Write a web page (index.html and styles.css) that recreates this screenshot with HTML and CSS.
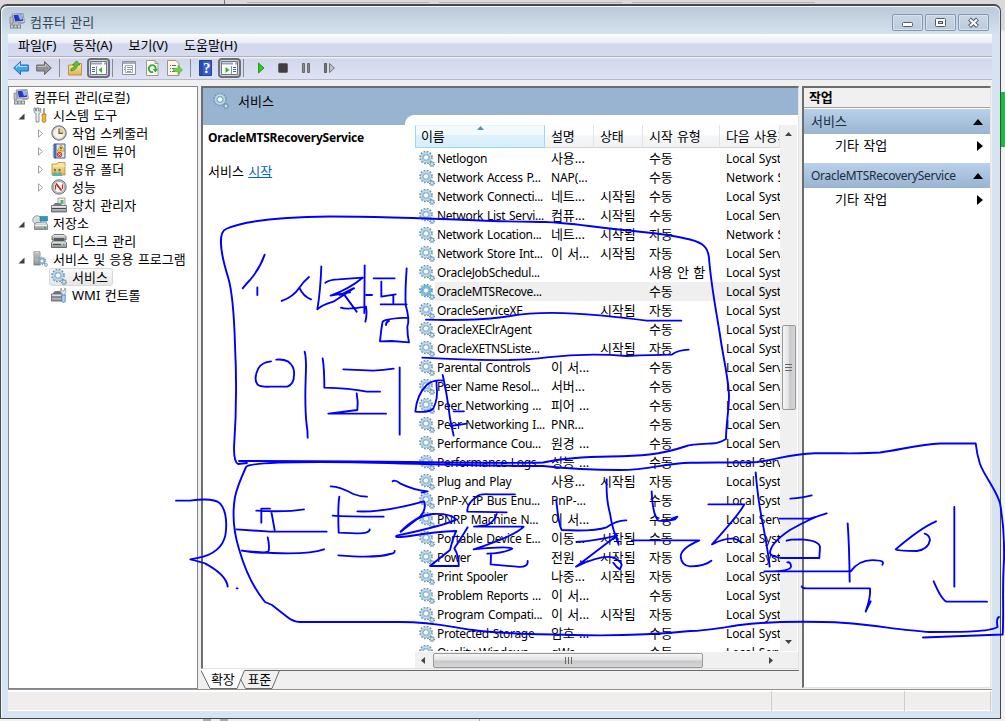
FILE: index.html
```html
<!DOCTYPE html>
<html lang="ko">
<head>
<meta charset="utf-8">
<title>컴퓨터 관리</title>
<link rel="stylesheet" href="styles.css">
</head>
<body>
<svg class="defs" width="0" height="0">
  <defs>
    <linearGradient id="folderFill" x1="0" y1="0" x2="0" y2="1"><stop offset="0" stop-color="#fbe9a8"/><stop offset="1" stop-color="#e0b455"/></linearGradient>
    <linearGradient id="steel" x1="0" y1="0" x2="0" y2="1"><stop offset="0" stop-color="#f4f4f4"/><stop offset="1" stop-color="#8c9094"/></linearGradient>
    <symbol id="gear" viewBox="0 0 16 16">
      <circle cx="7" cy="6.5" r="5.9" fill="none" stroke="#7497ae" stroke-width="1.9" stroke-dasharray="1.7 1.39"/>
      <circle cx="7" cy="6.5" r="4.2" fill="none" stroke="#8fbad4" stroke-width="2.6"/>
      <circle cx="7" cy="6.5" r="4.4" fill="none" stroke="#c3e2f3" stroke-width="1.1"/>
      <circle cx="7" cy="6.5" r="2.7" fill="#fff" stroke="#6b9aba" stroke-width=".8"/>
      <circle cx="13" cy="13" r="2.4" fill="none" stroke="#6d90a7" stroke-width="1.3" stroke-dasharray="1.1 .8"/>
      <circle cx="13" cy="13" r="1.5" fill="#f4fafd" stroke="#7ea8c1" stroke-width="1.1"/>
    </symbol>
    <symbol id="gear-active" viewBox="0 0 16 16">
      <circle cx="7" cy="6.5" r="5.9" fill="none" stroke="#4a93c9" stroke-width="1.9" stroke-dasharray="1.7 1.39"/>
      <circle cx="7" cy="6.5" r="4.2" fill="none" stroke="#6fb6e4" stroke-width="2.6"/>
      <circle cx="7" cy="6.5" r="2.7" fill="#fff" stroke="#4b97cc" stroke-width=".8"/>
      <circle cx="13" cy="13" r="2.4" fill="none" stroke="#4a8fc2" stroke-width="1.3" stroke-dasharray="1.1 .8"/>
      <circle cx="13" cy="13" r="1.5" fill="#f4fafd" stroke="#62a9da" stroke-width="1.1"/>
      <path d="M2 2h1.300v1.300h-1.300zM10.500 2h1.300v1.300h-1.300zM3 9.500h1.300v1.300h-1.300zM11.500 9.500h1.300v1.300h-1.300z" fill="#d9f000"/>
    </symbol>
    <symbol id="pc" viewBox="0 0 16 16">
      <path d="M3 1L14 0.5L15.5 9.5L5 10Z" fill="#d8d8d0" stroke="#8a8a84" stroke-width=".8"/>
      <path d="M4.5 2L13 1.6L14 8L6 8.5Z" fill="#2238c8"/><path d="M9 1.8L13 1.6L13.7 6L11 7Z" fill="#8fb4f4"/>
      <path d="M1 4H4V11H1Z" fill="#b9c0c6" stroke="#6d757b" stroke-width=".6"/>
      <path d="M1 11.5H12V15.5H1Z" fill="#80878c"/><path d="M2 12.5h2v2h-2zM5.5 12.5h2v2h-2zM9 12.5h2v2h-2z" fill="#d5dade"/>
      <path d="M9 10L14 9.7L15 11H9Z" fill="#a6a69e"/>
    </symbol>
    <symbol id="tools" viewBox="0 0 16 16">
      <path d="M2 1V4Q2 6 4 6.5V15H7V6.5Q9 6 9 3.5L8 1V4H6.5V1H4.5V4H3.5V1Z" fill="#e9edf0" stroke="#727a80" stroke-width=".8"/>
      <path d="M11.5 1.5H12.5V7H11.5Z" fill="#a0a5a9" stroke="#777" stroke-width=".5"/><path d="M10 7H14V9L13.4 10.5L14 13Q14 15.5 12 15.5Q10 15.5 10 13L10.6 10.5L10 9Z" fill="#f3b52a" stroke="#a87408" stroke-width=".7"/>
    </symbol>
    <symbol id="clock" viewBox="0 0 16 16"><circle cx="8" cy="8" r="7.2" fill="#b7b9ba" stroke="#6e7173"/><circle cx="8" cy="8" r="5.4" fill="#f9f3df" stroke="#e9e9e9"/><path d="M8 8V3A5 5 0 0 1 13 8Z" fill="#f0cb78"/><path d="M8 3.5V8.3H12" fill="none" stroke="#565d66" stroke-width="1.2"/></symbol>
    <symbol id="book" viewBox="0 0 16 16"><path d="M3 1H14V15H3Z" fill="#dde6f6" stroke="#3a5fa8"/><path d="M3 1H5.5V15H3Z" fill="#3d63b2"/><path d="M1.5 3H4.5M1.5 6H4.5M1.5 9H4.5M1.5 12H4.5" stroke="#748dbd"/><path d="M10 2L14 8H6Z" fill="#ffdc3d" stroke="#b58a12" stroke-width=".7"/><path d="M10 4V6M10 6.700V7.500" stroke="#443300" stroke-width="1.1"/><circle cx="8.5" cy="11.5" r="2.7" fill="#d64534"/><path d="M7.3 10.3L9.7 12.7M9.7 10.3L7.3 12.7" stroke="#fff" stroke-width=".8"/></symbol>
    <symbol id="folder" viewBox="0 0 16 16"><path d="M1 3H6L7 1.5H14V14H1Z" fill="url(#folderFill)" stroke="#b48b34" stroke-width=".8"/><path d="M2 5H14" stroke="#fff3c8"/><circle cx="4" cy="9" r="1.2" fill="#8b6740"/><circle cx="8.500" cy="9" r="1.2" fill="#8b6740"/><path d="M1.5 15Q1.5 11 4 11Q6 11 6.300 13Q6.700 11 8.500 11Q11 11 11 15Z" fill="#57b5a6"/></symbol>
    <symbol id="gauge" viewBox="0 0 16 16"><circle cx="8" cy="8" r="7.2" fill="#c3c5c6" stroke="#6d7072"/><circle cx="8" cy="8" r="5.5" fill="#fff" stroke="#8b8b8b" stroke-width=".6"/><path d="M4.5 10.5V6M11.5 10V5.5" stroke="#b33128" stroke-width="1.3"/><path d="M5 4.5L10.5 11.5" stroke="#c6251d" stroke-width="1.8"/></symbol>
    <symbol id="device" viewBox="0 0 16 16"><path d="M7 1H14V9H7Z" fill="#eef0ee" stroke="#8b918e" stroke-width=".8"/><path d="M9.500 3H12.500V7H9.500Z" fill="#64ad70"/><path d="M2 8L4 6H9L11 8Z" fill="#737b81"/><path d="M.5 8.500H15.5V15H.5Z" fill="url(#steel)" stroke="#555c61" stroke-width=".8"/><path d="M1 11.500H15" stroke="#454b50"/></symbol>
    <symbol id="storage" viewBox="0 0 16 16"><circle cx="5" cy="5" r="4.2" fill="#dfe6e9" stroke="#899398"/><circle cx="5" cy="5" r="1.2" fill="#fff" stroke="#92a0a7" stroke-width=".5"/><path d="M8 1.5H15.5V6H8Z" fill="#269bc8" stroke="#267796" stroke-width=".6"/><path d="M4 7.5L14 7L15.5 10V14.5H2.5V10Z" fill="url(#steel)" stroke="#686e73" stroke-width=".7"/><path d="M3 10.5H15" stroke="#fff" stroke-width=".8"/><path d="M12 12.5H14" stroke="#2eb241" stroke-width="1.4"/></symbol>
    <symbol id="disk" viewBox="0 0 16 16"><path d="M3 1.500H13L15 3.500V7H1V3.500Z" fill="url(#steel)" stroke="#555" stroke-width=".8"/><path d="M3 5H13V8H3Z" fill="#555b5e"/><path d="M2 8H14L15.5 10V14.5H.5V10Z" fill="url(#steel)" stroke="#555" stroke-width=".8"/><path d="M2 11.5H10" stroke="#4a4f52" stroke-width="1.3"/><path d="M12 11.5H13.5" stroke="#35b64a" stroke-width="1.3"/></symbol>
    <symbol id="server" viewBox="0 0 16 16"><path d="M2 .8H8V14H2Z" fill="url(#steel)" stroke="#6f777c" stroke-width=".8"/><path d="M3 3H7M3 5H7M3 7H7" stroke="#68757d" stroke-width=".7"/><circle cx="10" cy="10" r="2.400" fill="#fff" stroke="#86aeca" stroke-width="1.800"/><circle cx="10" cy="10" r="3.700" fill="none" stroke="#6f9cbb" stroke-width="1.100" stroke-dasharray="1.2 1.1"/><circle cx="14" cy="14" r="1.4" fill="#fff" stroke="#7fa4be"/></symbol>
    <symbol id="wmi" viewBox="0 0 16 16"><path d="M2 6L4 4H9L11 7H2Z" fill="#727a80"/><path d="M.5 7H12.5V14H.5Z" fill="url(#steel)" stroke="#555c61" stroke-width=".8"/><path d="M1 10H12" stroke="#454b50"/><path d="M10 1L11 4H13L14 1Q16 4 14 6.5V8H11V6.5Q8.5 4 10 1Z" fill="#eceff1" stroke="#7e878c" stroke-width=".7"/><path d="M10.8 8H14.2V14.5Q12.5 16.5 10.8 14.5Z" fill="#b8d2f6" stroke="#4b76b8" stroke-width=".8"/></symbol>
  </defs>
</svg>

<div class="backdrop">
  <div class="stripe-green"></div>
  <div class="hint-top"></div>
  <div class="hint-bottom"></div>
</div>

<div class="window">
  <header class="titlebar">
    <svg class="ic" width="16" height="16"><use href="#pc"/></svg>
    <span class="title">컴퓨터 관리</span>
    <div class="caption">
      <span class="cap"><svg width="29" height="15"><rect x="9.500" y="7.500" width="10" height="4" rx="1" fill="#fff" stroke="#555a68"/></svg></span>
      <span class="cap"><svg width="29" height="15"><rect x="9.500" y="3.500" width="10" height="8" rx="1" fill="#fff" stroke="#555a68"/><rect x="12.500" y="6.500" width="4" height="2" fill="#bccbdc" stroke="#555a68"/></svg></span>
      <span class="cap"><svg width="29" height="15"><path d="M10.500 4L18.500 11.500M18.500 4L10.500 11.500" stroke="#555a68" stroke-width="4.200"/><path d="M11 4.500L18 11M18 4.500L11 11" stroke="#fff" stroke-width="2.200"/></svg></span>
    </div>
  </header>

  <nav class="menubar"><span>파일(F)</span><span>동작(A)</span><span>보기(V)</span><span>도움말(H)</span></nav>

  <div class="toolbar">
    <svg width="16" height="16"><path d="M.7 8L7.500 1.500V5H15.300V11H7.500V14.500Z" fill="#3da9ea" stroke="#2369b3"/><path d="M3 7.500L6.500 4V6.500H14" fill="none" stroke="#a9e2fb" stroke-width="1.200"/></svg>
    <svg width="16" height="16"><path d="M15.300 8L8.500 1.500V5H.7V11H8.500V14.500Z" fill="#919191" stroke="#696969"/><path d="M1.500 6.500H9.500V4L13 7.500" fill="none" stroke="#c3c3c3"/></svg>
    <i class="sep"></i>
    <svg width="16" height="16"><path d="M.5 5H6L7 3.500H13.500V15H.5Z" fill="url(#folderFill)" stroke="#bd9240"/><path d="M3 9Q6 8 7 5H4.500L8.500 .8L12 5H9.500Q9 10 3 11Z" fill="#5fc437" stroke="#2f8918" stroke-width=".7"/></svg>
    <span class="toggle"><svg width="17" height="14"><path d="M.5 .5H16.500V13.500H.5Z" fill="#fdfdfd" stroke="#6f7683"/><path d="M1 2.500H12M14 2.500H16" stroke="#98a3b2" stroke-width="2"/><path d="M6.500 5V13" stroke="#8992a0"/><path d="M2 6.500H5M2 8.500H5M2 10.500H5" stroke="#376ba8"/><path d="M12 6V12L8.500 9Z" fill="#3caf22"/></svg></span>
    <i class="sep"></i>
    <svg width="16" height="16"><path d="M1.500 1.500H14.500V14.500H1.500Z" fill="#fafafa" stroke="#8d9297"/><path d="M2 3H14" stroke="#a9aeb3" stroke-width="2"/><path d="M4.500 5.500H11.500V12.500H4.500Z" fill="#fff" stroke="#a7adb2"/><path d="M3 7.500H4M6 7.500H11M3 9.500H4M6 9.500H11M6 11.500H10" stroke="#8a9bb0"/></svg>
    <svg width="16" height="16"><path d="M2.500 .5H11L14 3.500V15.500H2.500Z" fill="#fcfcf4" stroke="#9a9c94"/><path d="M11 .5V3.500H14" fill="none" stroke="#9a9c94"/><path d="M11.600 9.500A3.500 3.500 0 1 0 9 12" fill="none" stroke="#34ac34" stroke-width="1.900"/><path d="M8.500 9H14L11.500 12.500Z" fill="#34ac34"/></svg>
    <svg width="16" height="16"><path d="M.5 .5H9L12 3.500V15.500H.5Z" fill="#fcf8e2" stroke="#9b968a"/><path d="M3 5.500H4M5 5.500H9M3 8.500H4M5 8.500H8M3 11.500H4M5 11.500H8" stroke="#5a62a5"/><path d="M6.500 8.500H11V5.500L15.500 10L11 14.500V11.500H6.500Z" fill="#71cf3e" stroke="#55a52d" stroke-width=".6"/></svg>
    <i class="sep"></i>
    <svg width="16" height="16"><path d="M.5 .5H12.500V15.500H.5Z" fill="#395fcc" stroke="#24408f"/><path d="M1 1H4V15H1Z" fill="#2a4bac"/><text class="q" x="4" y="13">?</text></svg>
    <span class="toggle"><svg width="17" height="14"><path d="M.5 .5H16.500V13.500H.5Z" fill="#fdfdfd" stroke="#6f7683"/><path d="M1 2.500H12M14 2.500H16" stroke="#98a3b2" stroke-width="2"/><path d="M10.500 5V13" stroke="#8992a0"/><path d="M12 6.500H15M12 8.500H15M12 10.500H15" stroke="#376ba8"/><path d="M4.500 6V12L8.500 9Z" fill="#3caf22"/></svg></span>
    <i class="sep"></i>
    <svg width="16" height="16"><path d="M6.500 3V13L12 8Z" fill="#35c423" stroke="#249b18"/></svg>
    <svg width="16" height="16"><rect x="3.500" y="3.500" width="9" height="9" rx="1" fill="#3e3e40" stroke="#666"/></svg>
    <svg width="16" height="16"><path d="M4.500 3.500H6.500V12.500H4.500ZM9.500 3.500H11.500V12.500H9.500Z" fill="#8b8b8f" stroke="#68686d"/></svg>
    <svg width="16" height="16"><path d="M3.500 3.500H5.500V12.500H3.500Z" fill="#77777c" stroke="#5d5d62"/><path d="M8.500 3.500V12.500L13.500 8Z" fill="#bfbfc4" stroke="#77777c"/></svg>
  </div>

  <main class="content">
    <ul class="tree">
      <li class="l0"><svg class="ic" width="16" height="16"><use href="#pc"/></svg><span>컴퓨터 관리(로컬)</span></li>
      <li class="l1"><svg class="tw" width="7" height="7"><path d="M6.500 .5V6.500H.5Z" fill="#404040"/></svg><svg class="ic" width="16" height="16"><use href="#tools"/></svg><span>시스템 도구</span></li>
      <li class="l2"><svg class="tw" width="7" height="9"><path d="M1.500 .8V8.200L5.500 4.500Z" fill="#fff" stroke="#a0a0a0"/></svg><svg class="ic" width="16" height="16"><use href="#clock"/></svg><span>작업 스케줄러</span></li>
      <li class="l2"><svg class="tw" width="7" height="9"><path d="M1.500 .8V8.200L5.500 4.500Z" fill="#fff" stroke="#a0a0a0"/></svg><svg class="ic" width="16" height="16"><use href="#book"/></svg><span>이벤트 뷰어</span></li>
      <li class="l2"><svg class="tw" width="7" height="9"><path d="M1.500 .8V8.200L5.500 4.500Z" fill="#fff" stroke="#a0a0a0"/></svg><svg class="ic" width="16" height="16"><use href="#folder"/></svg><span>공유 폴더</span></li>
      <li class="l2"><svg class="tw" width="7" height="9"><path d="M1.500 .8V8.200L5.500 4.500Z" fill="#fff" stroke="#a0a0a0"/></svg><svg class="ic" width="16" height="16"><use href="#gauge"/></svg><span>성능</span></li>
      <li class="l2"><i class="tw"></i><svg class="ic" width="16" height="16"><use href="#device"/></svg><span>장치 관리자</span></li>
      <li class="l1"><svg class="tw" width="7" height="7"><path d="M6.500 .5V6.500H.5Z" fill="#404040"/></svg><svg class="ic" width="16" height="16"><use href="#storage"/></svg><span>저장소</span></li>
      <li class="l2"><i class="tw"></i><svg class="ic" width="16" height="16"><use href="#disk"/></svg><span>디스크 관리</span></li>
      <li class="l1"><svg class="tw" width="7" height="7"><path d="M6.500 .5V6.500H.5Z" fill="#404040"/></svg><svg class="ic" width="16" height="16"><use href="#server"/></svg><span>서비스 및 응용 프로그램</span></li>
      <li class="l2"><i class="tw"></i><b class="pick"><svg class="ic" width="16" height="16"><use href="#gear"/></svg><span>서비스</span></b></li>
      <li class="l2"><i class="tw"></i><svg class="ic" width="16" height="16"><use href="#wmi"/></svg><span>WMI 컨트롤</span></li>
    </ul>

    <section class="center">
      <div class="pane">
        <div class="banner"><svg class="ic" width="16" height="16"><use href="#gear"/></svg><span>서비스</span></div>
        <div class="split">
          <div class="detail">
            <div class="svcname">OracleMTSRecoveryService</div>
            <div class="action">서비스 <a>시작</a></div>
          </div>
          <div class="listwrap">
            <div class="listarea">
              <div class="list">
                <div class="row head"><span class="sorted">이름<svg class="sort" width="7" height="4"><path d="M0 4L3.500 0L7 4Z" fill="#5b8fae"/></svg></span><span>설명</span><span>상태</span><span>시작 유형</span><span>다음 사용자</span></div>
                <div class="row"><span class="n"><svg width="16" height="16"><use href="#gear"/></svg>Netlogon</span><span>사용...</span><span></span><span>수동</span><span class="lat">Local Syst</span></div>
                <div class="row"><span class="n"><svg width="16" height="16"><use href="#gear"/></svg>Network Access P...</span><span class="lat">NAP(...</span><span></span><span>수동</span><span class="lat">Network S</span></div>
                <div class="row"><span class="n"><svg width="16" height="16"><use href="#gear"/></svg>Network Connecti...</span><span>네트...</span><span>시작됨</span><span>수동</span><span class="lat">Local Syst</span></div>
                <div class="row"><span class="n"><svg width="16" height="16"><use href="#gear"/></svg>Network List Servi...</span><span>컴퓨...</span><span>시작됨</span><span>수동</span><span class="lat">Local Serv</span></div>
                <div class="row"><span class="n"><svg width="16" height="16"><use href="#gear"/></svg>Network Location...</span><span>네트...</span><span>시작됨</span><span>자동</span><span class="lat">Network S</span></div>
                <div class="row"><span class="n"><svg width="16" height="16"><use href="#gear"/></svg>Network Store Int...</span><span>이 서...</span><span>시작됨</span><span>자동</span><span class="lat">Local Serv</span></div>
                <div class="row"><span class="n"><svg width="16" height="16"><use href="#gear"/></svg>OracleJobSchedul...</span><span></span><span></span><span>사용 안 함</span><span class="lat">Local Syst</span></div>
                <div class="row current"><span class="n"><svg width="16" height="16"><use href="#gear-active"/></svg>OracleMTSRecove...</span><span></span><span></span><span>수동</span><span class="lat">Local Syst</span></div>
                <div class="row"><span class="n"><svg width="16" height="16"><use href="#gear"/></svg>OracleServiceXE</span><span></span><span>시작됨</span><span>자동</span><span class="lat">Local Syst</span></div>
                <div class="row"><span class="n"><svg width="16" height="16"><use href="#gear"/></svg>OracleXEClrAgent</span><span></span><span></span><span>수동</span><span class="lat">Local Syst</span></div>
                <div class="row"><span class="n"><svg width="16" height="16"><use href="#gear"/></svg>OracleXETNSListe...</span><span></span><span>시작됨</span><span>자동</span><span class="lat">Local Syst</span></div>
                <div class="row"><span class="n"><svg width="16" height="16"><use href="#gear"/></svg>Parental Controls</span><span>이 서...</span><span></span><span>수동</span><span class="lat">Local Serv</span></div>
                <div class="row"><span class="n"><svg width="16" height="16"><use href="#gear"/></svg>Peer Name Resol...</span><span>서버...</span><span></span><span>수동</span><span class="lat">Local Serv</span></div>
                <div class="row"><span class="n"><svg width="16" height="16"><use href="#gear"/></svg>Peer Networking ...</span><span>피어 ...</span><span></span><span>수동</span><span class="lat">Local Serv</span></div>
                <div class="row"><span class="n"><svg width="16" height="16"><use href="#gear"/></svg>Peer Networking I...</span><span class="lat">PNR...</span><span></span><span>수동</span><span class="lat">Local Serv</span></div>
                <div class="row"><span class="n"><svg width="16" height="16"><use href="#gear"/></svg>Performance Cou...</span><span>원경 ...</span><span></span><span>수동</span><span class="lat">Local Serv</span></div>
                <div class="row"><span class="n"><svg width="16" height="16"><use href="#gear"/></svg>Performance Logs...</span><span>성능 ...</span><span></span><span>수동</span><span class="lat">Local Serv</span></div>
                <div class="row"><span class="n"><svg width="16" height="16"><use href="#gear"/></svg>Plug and Play</span><span>사용...</span><span>시작됨</span><span>자동</span><span class="lat">Local Syst</span></div>
                <div class="row"><span class="n"><svg width="16" height="16"><use href="#gear"/></svg>PnP-X IP Bus Enu...</span><span class="lat">PnP-...</span><span></span><span>수동</span><span class="lat">Local Syst</span></div>
                <div class="row"><span class="n"><svg width="16" height="16"><use href="#gear"/></svg>PNRP Machine N...</span><span>이 서...</span><span></span><span>수동</span><span class="lat">Local Serv</span></div>
                <div class="row"><span class="n"><svg width="16" height="16"><use href="#gear"/></svg>Portable Device E...</span><span>이동...</span><span>시작됨</span><span>수동</span><span class="lat">Local Syst</span></div>
                <div class="row"><span class="n"><svg width="16" height="16"><use href="#gear"/></svg>Power</span><span>전원 ...</span><span>시작됨</span><span>자동</span><span class="lat">Local Syst</span></div>
                <div class="row"><span class="n"><svg width="16" height="16"><use href="#gear"/></svg>Print Spooler</span><span>나중...</span><span>시작됨</span><span>자동</span><span class="lat">Local Syst</span></div>
                <div class="row"><span class="n"><svg width="16" height="16"><use href="#gear"/></svg>Problem Reports ...</span><span>이 서...</span><span></span><span>수동</span><span class="lat">Local Syst</span></div>
                <div class="row"><span class="n"><svg width="16" height="16"><use href="#gear"/></svg>Program Compati...</span><span>이 서...</span><span>시작됨</span><span>자동</span><span class="lat">Local Syst</span></div>
                <div class="row"><span class="n"><svg width="16" height="16"><use href="#gear"/></svg>Protected Storage</span><span>암호 ...</span><span></span><span>수동</span><span class="lat">Local Syst</span></div>
                <div class="row"><span class="n"><svg width="16" height="16"><use href="#gear"/></svg>Quality Windows ...</span><span class="lat">qWa...</span><span></span><span>수동</span><span class="lat">Local Serv</span></div>
              </div>
              <div class="vbar">
                <svg class="up" width="7" height="4"><path d="M0 4L3.500 0L7 4Z" fill="#444"/></svg>
                <div class="vthumb"><i></i><i></i><i></i></div>
                <svg class="down" width="7" height="4"><path d="M0 0H7L3.500 4Z" fill="#444"/></svg>
              </div>
            </div>
            <div class="hbar">
              <svg width="4" height="7"><path d="M4 0V7L0 3.500Z" fill="#444"/></svg>
              <div class="hthumb"><i></i><i></i><i></i></div>
              <svg width="4" height="7"><path d="M0 0V7L4 3.500Z" fill="#444"/></svg>
            </div>
          </div>
        </div>
      </div>
      <div class="tabs">
        <svg class="tabshape" width="598" height="20"><path d="M0 0H43L36 19H9Z" fill="#fff"/><path d="M0 1.500L9 19.500H36L43.500 1.500H598M39.500 10L44.500 19.500H71L78.500 1.500" fill="none" stroke="#6b6b6b"/></svg>
        <span>확장</span><span>표준</span>
      </div>
    </section>

    <aside class="actions">
      <h2>작업</h2>
      <div class="group"><span>서비스</span><svg width="10" height="6"><path d="M0 6L5 0L10 6Z"/></svg></div>
      <div class="item"><span>기타 작업</span><svg width="6" height="10"><path d="M0 0V10L6 5Z"/></svg></div>
      <div class="group"><span class="lat">OracleMTSRecoveryService</span><svg width="10" height="6"><path d="M0 6L5 0L10 6Z"/></svg></div>
      <div class="item"><span>기타 작업</span><svg width="6" height="10"><path d="M0 0V10L6 5Z"/></svg></div>
    </aside>
  </main>

  <footer class="status"><span></span><span></span><span></span></footer>
</div>

<svg class="ink" width="1005" height="721" viewBox="0 0 1005 721">
  <path class="pen" d="M247 463L238 464Q234 462 234 448C237 405 236 365 235 345C234 310 232 290 228 277C219 248 219 232 226 229C245 220 285 217 330 216.500C380 216.500 430 218.500 480 220.500C500 221.500 530 221.700 545 222C570 222.500 590 227 640 231.700C665 234 680 237 690 239.500C704 243 708 248 709 258C711 285 716 310 720 335C723 357 728 375 729 395C729 410 726 425 726 439Q720 443 712 443.500C700 444 692 444 685 446.500C660 455 640 456 610 456.500C575 457 560 459 543 462.500C500 464 400 461 239 461"/>
  <path class="pen" d="M999 617Q996 618 997.500 627C990 632 960 632 930 632C895 630 860 622 823 622Q770 621 740 625C720 628 705 631 690 631C650 635 610 636 573 635Q500 634 473 630C450 627 435 622 400 622H300Q293 622 286 616L272 605L265 602C255 590 245 570 239 549C233 530 232 515 235 497Q237 487 246 467Q250 462 320 462C400 462 440 466 543 466Q580 470 620 470C650 470 665 463 690 462.700C720 462 740 463 757 462C775 460 790 454 815 453.300C840 453 865 454 880 452.500C900 450 920 444 940 443.500H975.700Q977 455 980 464C985 477 995 488 1000 503C1003 520 1004.500 540 1004 560C1002 590 1004 610 1002.700 634.500L923 637.500"/>
  <g class="pen3" transform="translate(210 205) scale(.33333)">
    <path d="M164 149Q150 190 120 225Q110 235 98 250M142 247V270M297 216Q280 230 268 248Q250 275 215 288M268 248Q280 275 303 283M334 184C332 240 326 290 322 313Q335 300 370 290L432 250M346 233Q360 223 385 223L458 218Q420 250 362 272L420 262M390 270L430 250M402 268L440 320M464 181L463 324M469 270H486M393 308Q410 315 468 305Q472 330 466 350"/>
    <path d="M491 220H554M514 230V275L557 268M550 270V297M512 298H590M590 190Q585 260 587 300Q600 345 592 365Q592 390 597 412L545 408L510 409Q515 360 518 350Q530 340 595 338M528 360Q528 350 537 348"/>
    <path d="M183 469Q155 472 145 490Q130 520 142 538Q150 546 180 545L232 545Q252 538 252 510Q255 485 235 470Q220 462 199 464M284 440Q290 460 287 520Q284 610 290 660Q293 675 293 698"/>
    <path d="M338 460Q343 490 343 548Q420 550 470 560L510 560M400 493L490 497Q520 496 551 491M440 565Q445 590 442 615L355 626H528M569 487V689"/>
    <path d="M700 527Q670 523 650 540Q620 570 616 620Q660 623 670 610Q685 580 680 545Q679 535 680 528M698 510Q710 560 720 640Q726 670 731 692M731 619H762M722 663L770 656"/>
  </g>
  <g class="pen3" transform="translate(400 260) scale(.33333)">
    <path d="M78 179Q240 183 330 168Q430 150 600 166Q690 175 740 182L844 182M67 293Q330 308 440 292Q560 278 680 288Q760 285 815 284Q835 270 866 269"/>
  </g>
  <g class="pen3" transform="translate(170 440) scale(.33333)">
    <path d="M18 182L60 182Q130 172 150 190Q172 215 168 270Q165 330 100 350Q80 355 61 358Q90 365 105 370Q170 405 173 440M200 445h3"/>
    <path d="M259 212Q350 217 402 208M274 248V206H300M304 215L314 270M199 268Q230 270 300 275L470 275M293 292Q300 320 295 335Q280 343 215 332Q400 350 462 328"/>
    <path d="M482 139Q510 140 550 162Q570 170 591 170M508 170Q503 200 506 278L560 280Q600 280 599 268M488 227Q520 230 641 230M562 214Q640 218 762 184Q770 210 750 230L692 275M505 346Q620 355 660 342Q675 340 674 333M668 124Q675 118 690 130Q730 150 773 154L755 158"/>
    <path d="M692 275Q740 225 790 222Q840 220 859 238Q830 255 680 287Q670 295 720 288Q800 275 859 273Q850 290 840 330L780 378H866Q868 350 853 325Q870 300 893 262"/>
  </g>
  <g class="pen3" transform="translate(400 440) scale(.33333)">
    <path d="M345 163H270Q240 160 230 170Q200 190 202 215L320 217M290 222Q280 250 258 256L222 260H371Q350 285 221 328Q330 318 337 326Q310 340 262 341M273 342L272 373L350 380Q385 384 383 363"/>
    <path d="M469 180Q475 250 485 270Q580 275 620 262Q650 240 679 241M620 118Q618 180 630 220Q635 260 656 314L648 284M530 306Q590 302 652 286L528 380Q600 345 640 352Q665 365 665 375L660 388Q650 383 640 368"/>
    <path d="M755 154Q758 225 775 242Q800 245 825 238L832 230L815 236M695 301H898Q842 325 842 350Q845 378 870 379Q915 378 934 362"/>
  </g>
  <g class="pen3" transform="translate(690 430) scale(.33333)">
    <path d="M55 223H163Q150 250 66 343Q100 325 130 325Q145 328 154 338M197 127Q205 220 220 290Q235 370 239 410M301 206Q340 203 365 196M268 266H360L410 250Q370 260 300 300Q240 340 240 370Q245 380 275 384L388 384L390 350Q385 330 330 328Q300 328 290 332"/>
    <path d="M482 424H223Q300 425 303 410Q303 395 292 397M473 280Q478 350 479 455M482 424Q510 385 560 391Q585 392 577 404M335 469Q335 476 355 475H540Q543 500 527 545L542 514"/>
    <path d="M738 274Q690 295 617 358Q620 363 680 363Q715 358 720 330Q718 315 704 311M793 231V470M731 454Q755 510 770 515H891"/>
  </g>
</svg>
</body>
</html>
```
FILE: styles.css
```css
* { box-sizing: border-box; }
body {
  display: flow-root;
  position: relative;
  margin: 0;
  width: 1005px;
  height: 721px;
  overflow: hidden;
  background: #fff;
  font: 13px/18px "Noto Sans", "Noto Sans CJK KR", sans-serif;
  word-spacing: 1px;
  color: #000;
}
svg { flex: none; display: block; }
.defs { position: absolute; }
.lat, .n { font-size: 12px; letter-spacing: -0.28px; }

/* whatever shows behind the window */
.backdrop { position: absolute; inset: 0; background: linear-gradient(#d9d9d9 30px, #f2f2f2 31px); }
.hint-top { position: absolute; left: 224px; top: 0; width: 790px; height: 5px; border-left: 1px solid #777; background: linear-gradient(90deg, transparent 22px, #b5b5b5 22px, #b5b5b5 204px, transparent 204px, transparent 214px, #b5b5b5 214px, #b5b5b5 397px, transparent 397px, transparent 407px, #b5b5b5 407px, #b5b5b5 590px, transparent 590px) 0 2px / 100% 1px no-repeat; }
.hint-bottom { position: absolute; left: 203px; top: 719px; width: 277px; height: 2px; background: #eee; border-left: 25px double #aaa; border-right: 1px solid #aaa; }
.stripe-green { position: absolute; left: 1001px; top: 92px; width: 4px; height: 55px; background: #18bd3c; }

.window {
  position: relative;
  margin-top: 4px;
  width: 1001px;
  height: 715px;
  border: solid #46494d;
  border-width: 2px 1px 1px 1px;
  border-radius: 7px 7px 0 0;
  background: #d6e4f1;
  box-shadow: inset 1px 1px 0 #f3f8fc;
  padding: 0 8px 7px 7px;
  display: flex;
  flex-direction: column;
}

.titlebar { flex: none; height: 27px; margin: 1px -7px 0 -6px; padding: 3px 10px 0 7px; display: flex; align-items: flex-start; background: linear-gradient(#bccad8, #d4e1ee); border-radius: 6px 6px 0 0; }
.titlebar .ic { margin-top: 3px; }
.title { margin: 3px 0 0 5px; color: #33475a; }
.caption { margin: 4px 0 0 auto; display: flex; gap: 2px; }
.cap { width: 31px; height: 17px; border: 1px solid #8496b1; border-radius: 2px; background: linear-gradient(#c9d6e4, #bccbdc); box-shadow: inset 0 0 0 1px #d6e2ee; }

.menubar { flex: none; height: 23px; padding: 2px 0 0 10px; display: flex; gap: 16px; background: linear-gradient(#fdfdfe, #e6eaf5 9px, #d3d8ec 10px, #d5daee); border-bottom: 1px solid #b2b2b2; }
.toolbar { flex: none; height: 23px; padding-left: 5px; display: flex; align-items: center; gap: 7px; border-bottom: 1px solid #b6b9cc; background: linear-gradient(#fafbfe, #d2d7ec 2px, #dee2f4); }
.sep { width: 1px; height: 18px; background: #8a8a90; margin-right: 1px; }
.toggle { width: 23px; height: 20px; margin: 0 -5px 0 -4px; border: 2px solid #6b6f7a; border-radius: 4px; background: #d0d3de; display: flex; align-items: center; justify-content: center; }
.q { font: bold 15px "Liberation Serif", serif; fill: #fff; }

.content { flex: 1; min-height: 0; background: #f0f0f0; display: grid; grid-template-columns: 190px 598px 189px; grid-template-rows: minmax(0, 1fr); column-gap: 3px; padding-top: 6px; }

.tree { margin: 0; padding: 1px 0 0 4px; list-style: none; background: #fff; border: 1px solid #828790; overflow: hidden; }
.tree li { height: 18px; display: flex; align-items: center; white-space: nowrap; }
.tree .ic { margin-right: 5px; }
.tree .tw { width: 7px; margin-right: 7px; flex: none; }
.l1 { padding-left: 5px; }
.l2 { padding-left: 24px; }
.l1 .tw { margin-top: 2px; }
.pick { font-weight: normal; display: flex; align-items: center; height: 18px; margin-left: -2px; padding: 0 4px 0 1px; border: 1px solid #d9d9d9; border-radius: 3px; background: linear-gradient(#fafafa, #e6e6e6); }
.pick span { padding-bottom: 1px; }

.center { display: flex; flex-direction: column; min-width: 0; min-height: 0; }
.pane { flex: 1; min-height: 0; background: #fff; border: solid #6d6d6d; border-width: 2px 1px 1px 2px; border-right-color: #e3e3e3; border-bottom-color: #e3e3e3; display: flex; flex-direction: column; }
.banner { flex: none; height: 27px; background: #99b4d1; display: flex; align-items: center; padding: 0 0 1px 10px; gap: 9px; }
.banner span { padding-bottom: 1px; }
.split { flex: 1; min-height: 0; display: grid; grid-template-columns: 202px 1fr; grid-template-rows: minmax(0, 1fr); background: linear-gradient(#99b4d1 10px, #fff 10px); }
.detail { padding: 13px 0 0 5px; }
.svcname { font-weight: bold; font-size: 12px; letter-spacing: -0.22px; padding-top: 1px; }
.action { margin-top: 15px; }
.action a { color: #0066cc; text-decoration: underline; }
.listwrap { background: #fff; border-top-left-radius: 9px; padding: 10px 0 0 10px; display: flex; flex-direction: column; min-width: 0; min-height: 0; }
.listarea { flex: 1; min-height: 0; display: grid; grid-template-columns: 365px 18px; grid-template-rows: minmax(0, 1fr); }
.list { overflow: hidden; min-height: 0; }
.row { height: 19px; display: grid; grid-template-columns: 130px 49px 49px 77px 60px; align-items: center; line-height: 19px; white-space: nowrap; }
.row > span { padding-left: 6px; height: 19px; overflow: hidden; letter-spacing: -0.1px; }
.row > .n { display: flex; align-items: center; padding-left: 4px; gap: 2px; letter-spacing: -0.3px; }
.row > .lat { letter-spacing: -0.1px; }
.row.current { background: linear-gradient(90deg, transparent 20px, #efefef 20px); }
.row.head { height: 24px; border-bottom: 1px solid #fff; }
.row.head > span { height: 23px; line-height: 23px; background: linear-gradient(#fff 45%, #f5f6f8 50%, #f1f2f4); border-right: 1px solid #e2e3e6; border-bottom: 1px solid #d5d5d5; }
.row.head > .sorted { position: relative; background: linear-gradient(#f3fafd 40%, #dcf1fa 45%, #d8eef8); border: 1px solid #96d9f9; border-top-color: #e6f5fb; padding-left: 5px; line-height: 21px; }
.sort { position: absolute; left: 61px; top: 0; }

.vbar { background: #f0f0f0; display: flex; flex-direction: column; align-items: center; border-right: 1px solid #fff; }
.up { margin-top: 7px; }
.vthumb { flex: none; margin-top: 189px; width: 14px; height: 85px; border: 1px solid #989898; border-radius: 2px; background: linear-gradient(90deg, #f5f5f5, #e3e3e3 45%, #c8c8cc 55%, #d7d7d9); display: flex; flex-direction: column; align-items: center; justify-content: center; gap: 2px; }
.vthumb i { width: 7px; height: 1px; background: #666; }
.down { margin-top: auto; margin-bottom: 7px; }
.hbar { height: 16px; flex: none; margin-top: 1px; width: 365px; background: #f0f0f0; display: flex; align-items: center; padding: 0 7px 0 6px; box-shadow: 18px 0 0 #f0f0f0; }
.hthumb { width: 270px; height: 15px; margin: 0 auto 0 8px; border: 1px solid #989898; border-radius: 2px; background: linear-gradient(#f5f5f5, #e3e3e3 45%, #c8c8cc 55%, #d7d7d9); display: flex; align-items: center; justify-content: center; gap: 2px; }
.hthumb i { width: 1px; height: 7px; background: #666; }

.tabs { position: relative; flex: none; height: 20px; display: flex; gap: 13px; padding: 1px 0 0 10px; letter-spacing: -0.2px; }
.tabs span { position: relative; }
.tabshape { position: absolute; left: 0; top: 0; }

.actions { background: #fff; border: solid #6d6d6d; border-width: 2px 1px 1px 2px; border-right-color: #e3e3e3; border-bottom-color: #e3e3e3; margin-bottom: 1px; min-width: 0; }
.actions h2 { margin: 0; font-size: 13px; height: 20px; line-height: 19px; background: #f0f0f0; border-bottom: 1px solid #a0a0a0; padding-left: 5px; letter-spacing: -0.2px; }
.group { margin-top: 1px; height: 25px; display: flex; align-items: center; justify-content: space-between; padding: 0 7px; background: linear-gradient(#b9d1ea, #99b4d1); color: #1c2b3c; }
.group svg { fill: #000; }
.group span:not(.lat) { padding-bottom: 2px; }
.item { height: 29px; display: flex; align-items: center; justify-content: space-between; padding: 0 7px 6px 31px; }
.item span { padding-bottom: 1px; }
.item + .group { margin-top: 0; }

.status { height: 22px; flex: none; border-top: 1px solid #8e8e8e; background: #f0eded; display: grid; grid-template-columns: 764px 133px 86px; box-shadow: inset 0 2px 0 #fff, inset 0 -1px 0 #fff; }
.status span { border-right: 1px solid #cfcccc; margin-top: 1px; }

.ink { position: absolute; left: 0; top: 0; }
.pen, .pen3 { fill: none; stroke: #0000fa; stroke-linecap: round; stroke-linejoin: round; }
.pen { stroke-width: 1.9; }
.pen3 { stroke-width: 5.6; }
```
